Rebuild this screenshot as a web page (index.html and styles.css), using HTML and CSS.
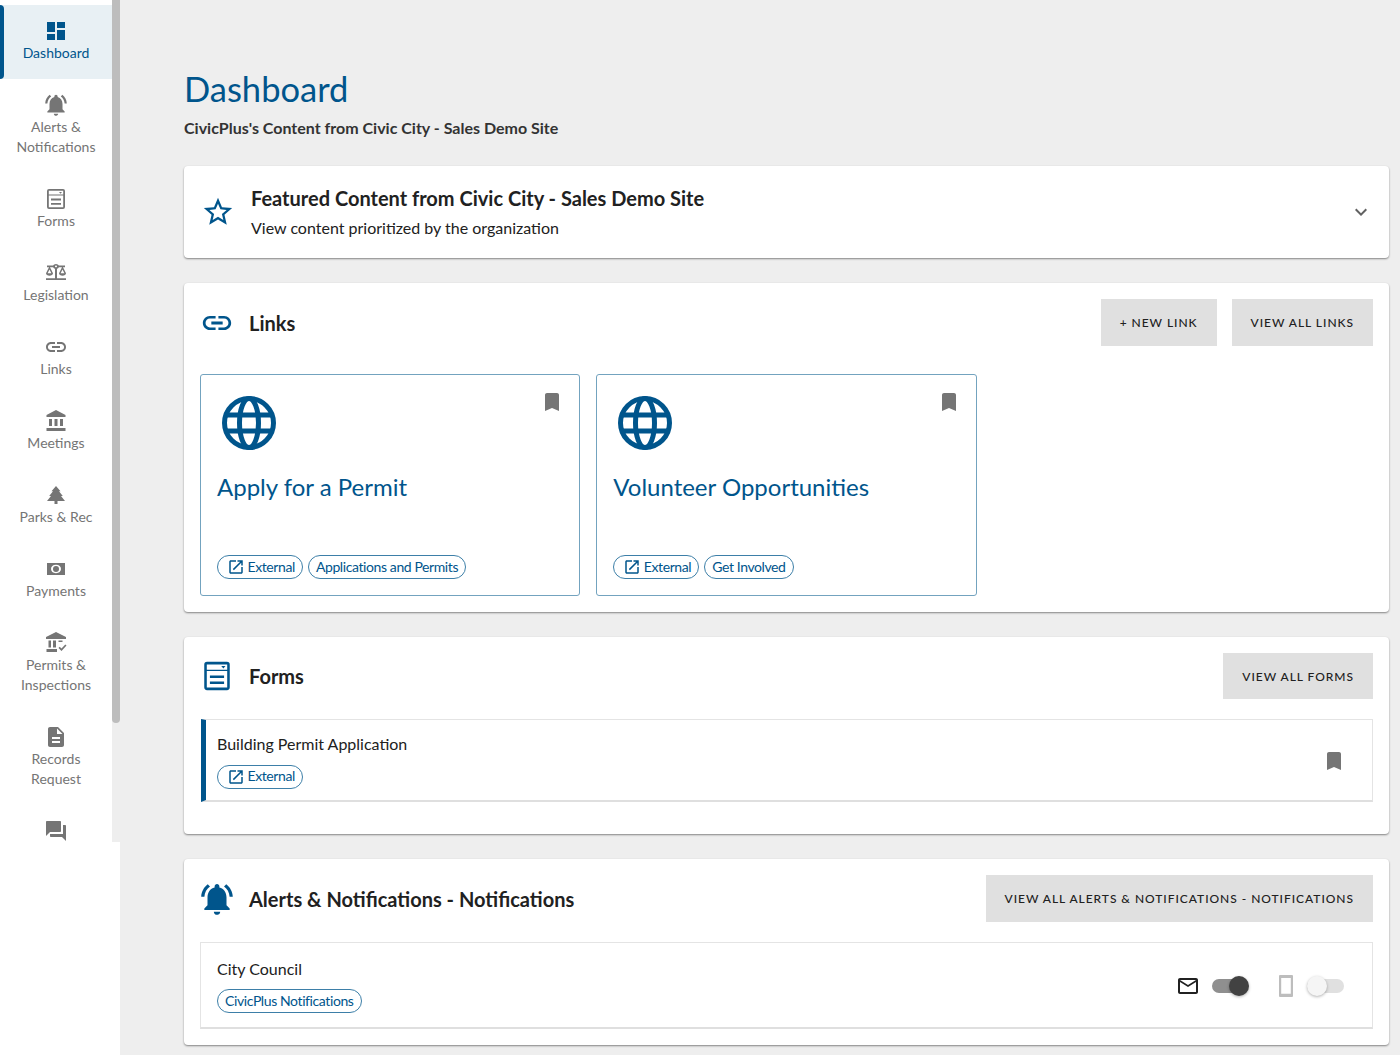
FILE: index.html
```html
<!DOCTYPE html>
<html lang="en">
<head>
<meta charset="utf-8">
<title>Dashboard</title>
<link rel="stylesheet" href="styles.css">
</head>
<body>
<svg class="sprite" aria-hidden="true">
  <symbol id="i-dash" viewBox="0 0 24 24"><path d="M3 13h8V3H3v10zm0 8h8v-6H3v6zm10 0h8V11h-8v10zm0-18v6h8V3h-8z"/></symbol>
  <symbol id="i-bell" viewBox="0 0 24 24"><path d="M7.58 4.08L6.15 2.65C3.75 4.48 2.17 7.3 2.03 10.5h2c.15-2.65 1.51-4.97 3.55-6.42zm12.39 6.42h2c-.15-3.2-1.73-6.02-4.12-7.85l-1.42 1.43c2.02 1.45 3.39 3.77 3.54 6.42zM18 11c0-3.07-1.64-5.64-4.5-6.32V4c0-.83-.67-1.5-1.5-1.5s-1.5.67-1.5 1.5v.68C7.63 5.36 6 7.92 6 11v5l-2 2v1h16v-1l-2-2v-5zm-6 11c.14 0 .27-.01.4-.04.65-.14 1.18-.58 1.44-1.18.1-.24.15-.5.15-.78h-4c.01 1.1.9 2 2.01 2z"/></symbol>
  <symbol id="i-form" viewBox="0 0 24 24"><path fill-rule="evenodd" d="M5 2h14a2 2 0 0 1 2 2v16a2 2 0 0 1-2 2H5a2 2 0 0 1-2-2V4a2 2 0 0 1 2-2zM4.800 3.800v3.700h14.400V3.800zM4.800 8.500v11.700h14.400V8.500zM15 5h3l-1.500 1.700zM7 11.600h10v1.800H7zM7 15.900h10v1.800H7z"/></symbol>
  <symbol id="i-scale" viewBox="0 0 24 24"><path transform="translate(0 1.200) scale(1 .85)" d="M13 7.830c.85-.3 1.530-.98 1.830-1.830H18l-3 7c0 1.660 1.570 3 3.500 3s3.500-1.340 3.500-3l-3-7h2V4h-6.170c-.41-1.170-1.520-2-2.830-2s-2.420.83-2.830 2H3v2h2l-3 7c0 1.660 1.570 3 3.500 3S9 14.660 9 13L6 6h3.170c.3.85.98 1.530 1.830 1.830V19H2v2h20v-2h-9V7.830zM20.370 13h-3.740l1.870-4.360L20.370 13zm-13 0H3.630L5.500 8.640 7.370 13zM12 6c-.55 0-1-.45-1-1s.45-1 1-1 1 .45 1 1-.45 1-1 1z"/></symbol>
  <symbol id="i-link" viewBox="0 0 24 24"><path d="M3.900 12c0-1.710 1.390-3.100 3.100-3.100h4V7H7c-2.760 0-5 2.240-5 5s2.240 5 5 5h4v-1.900H7c-1.710 0-3.100-1.390-3.100-3.100zM8 13h8v-2H8v2zm9-6h-4v1.900h4c1.710 0 3.100 1.390 3.100 3.100s-1.390 3.100-3.100 3.100h-4V17h4c2.760 0 5-2.240 5-5s-2.240-5-5-5z"/></symbol>
  <symbol id="i-bank" viewBox="0 0 24 24"><path d="M5 10v7h3v-7H5zm5.500 0v7h3v-7h-3zM2.500 22h19v-3h-19v3zM16 10v7h3v-7h-3zM12 1L2.500 6v2h19V6L12 1z"/></symbol>
  <symbol id="i-tree" viewBox="0 0 24 24"><path d="M12 3l4.500 5.200H15l3.800 4.800H17l4 5h-7.500v3h-3v-3H3l4-5H5.200L9 8.200H7.500z"/></symbol>
  <symbol id="i-money" viewBox="0 0 24 24"><path fill-rule="evenodd" d="M3 6h18v12H3zm9 1.800c-3.200 0-5 2-5 4.200s1.800 4.200 5 4.200 5-2 5-4.200-1.800-4.200-5-4.200z"/><circle cx="12" cy="12" r="3"/></symbol>
  <symbol id="i-permit" viewBox="0 0 24 24"><path d="M4.500 9.500v7H7v-7H4.500zm4.500 0v7h3v-7H9zM2.500 21H13v-3H2.500v3zM14.500 9.500V11h4V9.500h-4zM12 1L2 6v2h20V6L12 1z"/><path d="M14.500 17l1.200-1.200 1.800 1.800 3.800-4.100 1.200 1.100-5 5.400z"/></symbol>
  <symbol id="i-doc" viewBox="0 0 24 24"><path d="M14 2H6c-1.100 0-1.990.9-1.990 2L4 20c0 1.100.89 2 1.990 2H18c1.100 0 2-.9 2-2V8l-6-6zm2 16H8v-2h8v2zm0-4H8v-2h8v2zm-3-5V3.500L18.500 9H13z"/></symbol>
  <symbol id="i-chat" viewBox="0 0 24 24"><path d="M21 6h-2v9H6v2c0 .55.45 1 1 1h11l4 4V7c0-.55-.45-1-1-1zm-4 6V3c0-.55-.45-1-1-1H3c-.55 0-1 .45-1 1v14l4-4h10c.55 0 1-.45 1-1z"/></symbol>
  <symbol id="i-star" viewBox="0 0 24 24"><path d="M22 9.240l-7.190-.62L12 2 9.190 8.630 2 9.240l5.460 4.730L5.820 21 12 17.270 18.180 21l-1.630-7.030L22 9.240zM12 15.400l-3.760 2.270 1-4.280-3.320-2.880 4.380-.38L12 6.100l1.710 4.040 4.380.38-3.320 2.880 1 4.280L12 15.400z"/></symbol>
  <symbol id="i-more" viewBox="0 0 24 24"><path d="M16.590 8.590L12 13.170 7.410 8.590 6 10l6 6 6-6z"/></symbol>
  <symbol id="i-mark" viewBox="0 0 24 24"><path d="M17 3H7c-1.100 0-1.990.9-1.990 2L5 21l7-3 7 3V5c0-1.100-.9-2-2-2z"/></symbol>
  <symbol id="i-open" viewBox="0 0 24 24"><path d="M19 19H5V5h7V3H5c-1.110 0-2 .9-2 2v14c0 1.100.89 2 2 2h14c1.100 0 2-.9 2-2v-7h-2v7zM14 3v2h3.590l-9.830 9.830 1.410 1.410L19 6.410V10h2V3h-7z"/></symbol>
  <symbol id="i-mail" viewBox="0 0 24 24"><path d="M20 4H4c-1.100 0-1.990.9-1.990 2L2 18c0 1.100.9 2 2 2h16c1.100 0 2-.9 2-2V6c0-1.100-.9-2-2-2zm0 14H4V8l8 5 8-5v10zm-8-7L4 6h16l-8 5z"/></symbol>
  <symbol id="i-phone" viewBox="0 0 24 24"><path fill-rule="evenodd" d="M6 1h12a1 1 0 0 1 1 1v20a1 1 0 0 1-1 1H6a1 1 0 0 1-1-1V2a1 1 0 0 1 1-1zm1.200 3v15.800h9.600V4z"/></symbol>
  <symbol id="i-globe" viewBox="0 0 54 54"><g fill="none" stroke="currentColor" stroke-width="5"><circle cx="27" cy="27" r="24.500"/><ellipse cx="27" cy="27" rx="9.500" ry="24.500"/><path d="M3 19h48M3 35h48"/></g></symbol>
</svg>

<div class="app">
  <aside class="sidebar">
    <div class="rail">
      <nav class="nav">
        <a class="nav-item active"><svg class="nav-icon"><use href="#i-dash"/></svg><span>Dashboard</span></a>
        <a class="nav-item"><svg class="nav-icon big"><use href="#i-bell"/></svg><span>Alerts &amp; Notifications</span></a>
        <a class="nav-item"><svg class="nav-icon"><use href="#i-form"/></svg><span>Forms</span></a>
        <a class="nav-item"><svg class="nav-icon"><use href="#i-scale"/></svg><span>Legislation</span></a>
        <a class="nav-item"><svg class="nav-icon"><use href="#i-link"/></svg><span>Links</span></a>
        <a class="nav-item"><svg class="nav-icon"><use href="#i-bank"/></svg><span>Meetings</span></a>
        <a class="nav-item"><svg class="nav-icon"><use href="#i-tree"/></svg><span>Parks &amp; Rec</span></a>
        <a class="nav-item"><svg class="nav-icon"><use href="#i-money"/></svg><span>Payments</span></a>
        <a class="nav-item"><svg class="nav-icon"><use href="#i-permit"/></svg><span>Permits &amp; Inspections</span></a>
        <a class="nav-item"><svg class="nav-icon"><use href="#i-doc"/></svg><span>Records Request</span></a>
        <a class="nav-item"><svg class="nav-icon"><use href="#i-chat"/></svg></a>
      </nav>
      <div class="scrollbar"><div class="thumb"></div></div>
    </div>
  </aside>

  <main class="main">
    <h1 class="page-title">Dashboard</h1>
    <p class="page-sub">CivicPlus's Content from Civic City - Sales Demo Site</p>

    <section class="card featured">
      <svg class="star"><use href="#i-star"/></svg>
      <div class="featured-text">
        <h2 class="featured-title">Featured Content from Civic City - Sales Demo Site</h2>
        <p class="featured-sub">View content prioritized by the organization</p>
      </div>
      <svg class="chevron"><use href="#i-more"/></svg>
    </section>

    <section class="card panel">
      <header class="panel-head">
        <svg class="head-icon"><use href="#i-link"/></svg>
        <h2 class="panel-title">Links</h2>
        <a class="btn">+ New Link</a>
        <a class="btn">View All Links</a>
      </header>
      <div class="link-grid">
        <article class="link-card">
          <svg class="globe"><use href="#i-globe"/></svg>
          <svg class="bookmark corner"><use href="#i-mark"/></svg>
          <h3 class="link-title">Apply for a Permit</h3>
          <div class="chips">
            <span class="chip"><svg class="chip-icon"><use href="#i-open"/></svg>External</span>
            <span class="chip">Applications and Permits</span>
          </div>
        </article>
        <article class="link-card">
          <svg class="globe"><use href="#i-globe"/></svg>
          <svg class="bookmark corner"><use href="#i-mark"/></svg>
          <h3 class="link-title">Volunteer Opportunities</h3>
          <div class="chips">
            <span class="chip"><svg class="chip-icon"><use href="#i-open"/></svg>External</span>
            <span class="chip">Get Involved</span>
          </div>
        </article>
      </div>
    </section>

    <section class="card panel forms-panel">
      <header class="panel-head">
        <svg class="head-icon"><use href="#i-form"/></svg>
        <h2 class="panel-title">Forms</h2>
        <a class="btn">View All Forms</a>
      </header>
      <div class="row row-accent">
        <div class="row-body">
          <div class="row-title">Building Permit Application</div>
          <div class="chips"><span class="chip"><svg class="chip-icon"><use href="#i-open"/></svg>External</span></div>
        </div>
        <svg class="bookmark row-mark"><use href="#i-mark"/></svg>
      </div>
    </section>

    <section class="card panel alerts-panel">
      <header class="panel-head">
        <svg class="head-icon bell"><use href="#i-bell"/></svg>
        <h2 class="panel-title">Alerts &amp; Notifications - Notifications</h2>
        <a class="btn">View All Alerts &amp; Notifications - Notifications</a>
      </header>
      <div class="row row-alert">
        <div class="row-body">
          <div class="row-title">City Council</div>
          <div class="chips"><span class="chip">CivicPlus Notifications</span></div>
        </div>
        <div class="toggles">
          <svg class="toggle-icon"><use href="#i-mail"/></svg>
          <span class="switch on"><span class="knob"></span></span>
          <svg class="toggle-icon phone"><use href="#i-phone"/></svg>
          <span class="switch off"><span class="knob"></span></span>
        </div>
      </div>
    </section>
  </main>
</div>
</body>
</html>
```

FILE: styles.css
```css
* { box-sizing: border-box; }
html, body { margin: 0; height: 100%; }
body {
  font-family: Lato, "Liberation Sans", sans-serif;
  background: #eeeeee;
  color: #212121;
  overflow: hidden;
}
.sprite { display: none; }
svg { fill: currentColor; display: block; flex: none; }

.app { display: flex; height: 1055px; }

.sidebar { width: 120px; flex: none; background: #fff; height: 100%; }
.rail { display: flex; height: 842px; overflow: hidden; }
.nav { width: 112px; flex: none; padding-top: 5px; }
.nav-item {
  position: relative;
  display: flex;
  flex-direction: column;
  align-items: center;
  padding: 14px 10px 16px;
  font-size: 14px;
  line-height: 20px;
  color: #757575;
  text-align: center;
}
.nav-item span { display: block; }
.nav-icon { width: 24px; height: 24px; }
.nav-icon.big { width: 26px; height: 26px; margin: -1px 0; }
.nav-item.active { background: #e8f0f4; color: #00558c; }
.nav-item.active::before {
  content: "";
  position: absolute;
  left: 0;
  top: 0;
  bottom: 0;
  width: 4px;
  background: #00558c;
  border-radius: 0 4px 4px 0;
}
.scrollbar { width: 8px; flex: none; background: #eeeeee; }
.thumb { height: 723px; background: #bdbdbd; border-radius: 0 0 4px 4px; }

.main { flex: 1; padding: 0 11px 0 64px; min-width: 0; }
.page-title {
  margin: 67px 0 0;
  font-size: 34.5px;
  line-height: 44px;
  font-weight: 400;
  color: #00558c;
}
.page-sub {
  margin: 6px 0 0;
  font-size: 16px;
  line-height: 22px;
  font-weight: 700;
  color: #333;
}

.card {
  background: #fff;
  border-radius: 4px;
  box-shadow: 0 1px 2px rgba(0, 0, 0, 0.45);
}
.featured {
  margin-top: 27px;
  height: 92px;
  display: flex;
  align-items: center;
  padding: 0 16px 0 17px;
}
.star { width: 34px; height: 34px; color: #00558c; }
.featured-text { flex: 1; margin-left: 16px; }
.featured-title {
  margin: 0;
  font-size: 20px;
  line-height: 24px;
  font-weight: 700;
  color: #212121;
}
.featured-sub { margin: 7px 0 0; font-size: 16px; line-height: 22px; color: #212121; }
.chevron { width: 24px; height: 24px; color: #616161; }

.panel { margin-top: 25px; padding: 16px; }
.panel-head { display: flex; align-items: center; gap: 15px; }
.head-icon { width: 34px; height: 34px; color: #00558c; }
.head-icon.bell { width: 38px; height: 38px; margin: -2px; }
.panel-title {
  margin: 0 auto 0 0;
  font-size: 20px;
  line-height: 30px;
  font-weight: 700;
  color: #212121;
}
.btn {
  height: 47px;
  display: flex;
  align-items: center;
  padding: 0 19px;
  background: #e0e0e0;
  font-size: 12px;
  font-weight: 500;
  letter-spacing: 0.96px;
  text-transform: uppercase;
  color: #212121;
}

.link-grid {
  margin-top: 28px;
  display: grid;
  grid-template-columns: repeat(3, 1fr);
  gap: 16px;
}
.link-card {
  position: relative;
  height: 222px;
  border: 1px solid #73a3bf;
  border-radius: 3px;
  padding: 21px 16px 16px;
  display: flex;
  flex-direction: column;
}
.globe { width: 54px; height: 54px; color: #00558c; margin-left: 5px; }
.corner { position: absolute; top: 15px; right: 15px; }
.bookmark { width: 24px; height: 24px; color: #757575; }
.row-mark { margin-top: 1px; }
.link-title {
  margin: 20px 0 0;
  font-size: 24px;
  line-height: 34px;
  font-weight: 400;
  color: #00558c;
}
.link-card .chips { margin-top: auto; }
.chips { display: flex; gap: 5px; }
.chip {
  display: inline-flex;
  align-items: center;
  height: 24px;
  padding: 0 7px 2px;
  border: 1px solid #3d7fa8;
  border-radius: 12px;
  font-size: 14px;
  letter-spacing: -0.4px;
  color: #00558c;
}
.chip-icon { width: 18px; height: 18px; margin: 2px 3px 0 1.5px; }

.forms-panel { height: 197px; }
.forms-panel .btn { height: 46px; }
.alerts-panel { height: 186px; }

.row {
  display: flex;
  align-items: center;
  margin-top: 20px;
  border: 1px solid #e4e4e4;
  border-bottom: 2px solid #dfdfdf;
  padding: 1px 26px 0 16px;
}
.row-accent { height: 83px; margin-left: 1px; border-left: 5px solid #00558c; padding-left: 11px; }
.row-alert { height: 87px; padding-right: 28px; }
.row-body { flex: 1; }
.row-title { font-size: 16px; line-height: 22px; color: #212121; margin-bottom: 10px; }
.row-alert .row-title { margin-bottom: 9px; }

.toggles { display: flex; align-items: center; margin-top: 1px; }
.toggle-icon { width: 24px; height: 24px; color: #212121; }
.toggle-icon.phone { color: #bdbdbd; margin-left: 28px; }
.switch {
  position: relative;
  display: block;
  width: 34px;
  height: 14px;
  border-radius: 7px;
  margin-left: 12px;
}
.switch.on { background: #8f8f8f; }
.switch.off { background: #e0e0e0; margin-left: 9px; width: 37px; }
.knob {
  position: absolute;
  top: -3px;
  width: 20px;
  height: 20px;
  border-radius: 50%;
  box-shadow: 0 1px 3px rgba(0, 0, 0, 0.3);
}
.on .knob { right: -3px; background: #424242; }
.off .knob { left: 0; background: #f5f5f5; }
```
